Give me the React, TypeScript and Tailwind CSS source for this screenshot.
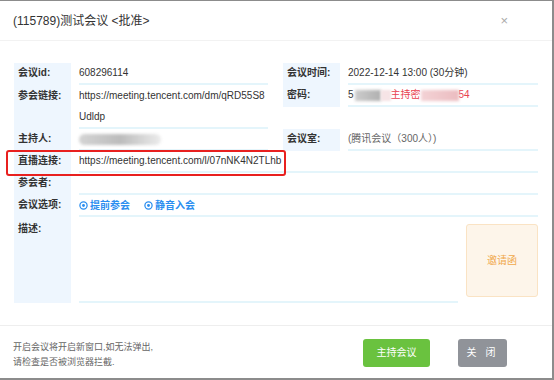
import React from 'react';

const Label: React.FC<{ text: string; className?: string }> = ({ text, className = '' }) => (
  <div className={`w-[57px] shrink-0 bg-[#eef6fe] pl-1 font-bold text-[#333] ${className}`}>{text}</div>
);

const OptionDot: React.FC = () => (
  <svg width="9" height="9" viewBox="0 0 10 10" className="mr-[2px]">
    <circle cx="5" cy="5" r="4" fill="none" stroke="#2b8ef0" strokeWidth="1.4" />
    <circle cx="5" cy="5" r="1.6" fill="#2b8ef0" />
  </svg>
);

const App: React.FC = () => {
  return (
    <div
      className="relative h-[380px] w-[554px] overflow-hidden border-t border-r-2 border-b-2 border-[#8c8c8c] bg-white text-[10px] text-[#333]"
      style={{ fontFamily: '"Liberation Sans", "Noto Sans CJK SC", sans-serif' }}
    >
      {/* header */}
      <div className="flex h-[40px] items-center justify-between border-b border-[#f2f2f2] pl-[13px] pr-[44px]">
        <div className="text-[12px] text-[#333]">(115789)测试会议 &lt;批准&gt;</div>
        <div className="text-[13px] leading-none text-[#aaa]">×</div>
      </div>

      {/* body */}
      <div className="pl-[14px] pt-[22px] pr-[14px] pb-[22px]">
        <div className="flex">
          {/* left half */}
          <div className="flex w-[254px] flex-col">
            <div className="flex h-[22px]">
              <Label text="会议id:" className="leading-[20px]" />
              <div className="ml-2 flex-1 border-b-2 border-[#e4f5fb] leading-[20px]">608296114</div>
            </div>
            <div className="flex h-[44px]">
              <Label text="参会链接:" className="leading-[21px]" />
              <div className="ml-2 flex-1 border-b-2 border-[#e4f5fb] leading-[21px]">
                https://meeting.tencent.com/dm/qRD55S8
                <br />
                Udldp
              </div>
            </div>
            <div className="flex h-[22px]">
              <Label text="主持人:" className="leading-[20px]" />
              <div className="ml-2 flex flex-1 items-center border-b-2 border-[#e4f5fb]">
                <div className="h-[11px] w-[82px] rounded-full bg-gradient-to-r from-[#d4d4d4] via-[#bcbcbc] to-[#ececec] blur-[1.5px]" />
              </div>
            </div>
          </div>
          {/* right half */}
          <div className="ml-[15px] flex flex-1 flex-col">
            <div className="flex h-[22px]">
              <Label text="会议时间:" className="leading-[20px]" />
              <div className="ml-2 flex-1 border-b-2 border-[#e4f5fb] leading-[20px]">2022-12-14 13:00 (30分钟)</div>
            </div>
            <div className="flex h-[22px]">
              <Label text="密码:" className="leading-[20px]" />
              <div className="ml-2 flex flex-1 items-center border-b-2 border-[#e4f5fb] leading-[20px]">
                <span>5</span>
                <span className="ml-[1px] h-[11px] w-[26px] bg-gradient-to-r from-[#cccccc] to-[#b0b0b0] blur-[1.5px]" />
                <span className="h-[11px] w-[10px] bg-[#f6e4e6] blur-[1px]" />
                <span className="text-[#e8414f]">主持密</span>
                <span className="h-[11px] w-[38px] bg-gradient-to-r from-[#f3d2d5] to-[#ebbcc0] blur-[1.5px]" />
                <span className="text-[#e8414f]">54</span>
              </div>
            </div>
            <div className="h-[22px]" />
            <div className="flex h-[22px]">
              <Label text="会议室:" className="leading-[20px]" />
              <div className="ml-2 flex-1 border-b-2 border-[#e4f5fb] leading-[20px] text-[#666]">(腾讯会议（300人）)</div>
            </div>
          </div>
        </div>

        <div className="flex h-[22px]">
          <Label text="直播连接:" className="leading-[20px]" />
          <div className="ml-2 flex-1 border-b-2 border-[#e4f5fb] leading-[20px]">https://meeting.tencent.com/l/07nNK4N2TLhb</div>
        </div>
        <div className="flex h-[22px]">
          <Label text="参会者:" className="leading-[20px]" />
          <div className="ml-2 flex-1 border-b-2 border-[#e4f5fb]" />
        </div>
        <div className="flex h-[22px]">
          <Label text="会议选项:" className="leading-[20px]" />
          <div className="ml-2 flex flex-1 items-center border-b-2 border-[#e4f5fb] font-bold text-[#2b8ef0]">
            <OptionDot />
            <span>提前参会</span>
            <span className="ml-[14px]" />
            <OptionDot />
            <span>静音入会</span>
          </div>
        </div>
        <div className="flex h-[86px]">
          <Label text="描述:" className="pt-[2px] leading-[20px]" />
          <div className="ml-2 flex-1 border-b-2 border-[#e4f5fb]" />
          <div className="ml-2 flex w-[72px] flex-col pt-[7px] pb-[6px]">
            <div className="flex flex-1 items-center justify-center rounded-[3px] border border-[#fae3c4] bg-[#fdf5ea] text-[#f0a84a]">
              邀请函
            </div>
          </div>
        </div>
      </div>

      {/* footer */}
      <div className="flex h-[54px] items-center border-t border-[#eeeeee] pl-[13px] pr-[45px]">
        <div className="flex-1 pt-[5px] text-[9px] leading-[15px] text-[#666]">
          <div>开启会议将开启新窗口,如无法弹出,</div>
          <div>请检查是否被浏览器拦截.</div>
        </div>
        <button className="h-[28px] w-[67px] rounded-[3px] bg-[#6ac23f] text-[10px] text-white">主持会议</button>
        <button className="ml-[28px] h-[28px] w-[49px] rounded-[3px] bg-[#909399] text-[10px] tracking-[3px] text-white">关 闭</button>
      </div>

      {/* red annotation box */}
      <div className="absolute left-[6px] top-[149px] h-[26px] w-[280px] rounded-[3px] border-2 border-[#e8201f]" />
    </div>
  );
};

export default App;
